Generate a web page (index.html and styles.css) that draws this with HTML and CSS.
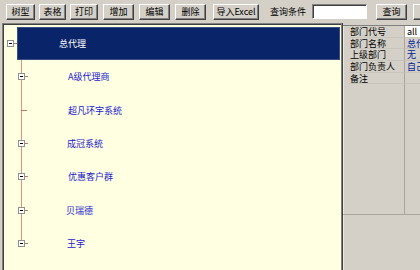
FILE: index.html
```html
<!DOCTYPE html>
<html>
<head>
<meta charset="utf-8">
<link rel="stylesheet" href="styles.css">
</head>
<body>
<div class="toolbar">
  <button class="btn b1">树型</button>
  <button class="btn b2">表格</button>
  <button class="btn b3">打印</button>
  <button class="btn b4">增加</button>
  <button class="btn b5">编辑</button>
  <button class="btn b5">删除</button>
  <button class="btn b6">导入Excel</button>
  <span class="label">查询条件</span>
  <input class="search" type="text">
  <button class="btn b7">查询</button>
  <button class="btn b8" aria-label="更多"></button>
</div>
<div class="main">
  <div class="tree">
    <div class="root">
      <span class="exp"></span><span class="dash"></span>
      <div class="root-label">总代理</div>
    </div>
    <div class="node">
      <div class="conn"><span class="exp"></span><span class="dash"></span></div>
      <span class="text">A级代理商</span>
    </div>
    <div class="node">
      <div class="conn leaf"><span class="dash long"></span></div>
      <span class="text">超凡环宇系统</span>
    </div>
    <div class="node">
      <div class="conn"><span class="exp"></span><span class="dash"></span></div>
      <span class="text t2">成冠系统</span>
    </div>
    <div class="node">
      <div class="conn"><span class="exp"></span><span class="dash"></span></div>
      <span class="text">优惠客户群</span>
    </div>
    <div class="node">
      <div class="conn"><span class="exp"></span><span class="dash"></span></div>
      <span class="text t3">贝瑞德</span>
    </div>
    <div class="node last">
      <div class="conn"><span class="exp"></span><span class="dash"></span></div>
      <span class="text t2">王宇</span>
    </div>
  </div>
  <div class="props">
    <div class="ptable">
      <div class="prow"><span class="gut"></span><span class="pk">部门代号</span><span class="pv edit">all</span></div>
      <div class="prow"><span class="gut"></span><span class="pk">部门名称</span><span class="pv">总代</span></div>
      <div class="prow"><span class="gut"></span><span class="pk">上级部门</span><span class="pv">无</span></div>
      <div class="prow"><span class="gut"></span><span class="pk">部门负责人</span><span class="pv">自己</span></div>
      <div class="prow"><span class="gut"></span><span class="pk">备注</span><span class="pv"></span></div>
      <div class="prow fill"><span class="gut"></span><span class="pk"></span><span class="pv"></span></div>
    </div>
    <div class="help"></div>
  </div>
</div>
</body>
</html>
```
FILE: styles.css
```css
html, body {
  margin: 0;
  padding: 0;
}
body {
  width: 420px;
  height: 270px;
  overflow: hidden;
  background: #d4d0c8;
  font-family: "Noto Sans CJK SC", "Liberation Sans", sans-serif;
  font-size: 9px;
  color: #000;
}
.toolbar {
  display: flex;
  align-items: center;
  height: 23px;
  white-space: nowrap;
}
.btn {
  flex: none;
  height: 16px;
  box-sizing: border-box;
  padding: 0;
  margin: 0;
  border: 1px solid;
  border-color: #fff #404040 #404040 #fff;
  box-shadow: inset -1px -1px #808080;
  background: #d4d0c8;
  font: inherit;
  color: #000;
  display: flex;
  align-items: center;
  justify-content: center;
  line-height: 1;
}
.b1 { width: 29px; margin-left: 6px; }
.b2 { width: 27px; margin-left: 4px; }
.b3 { width: 28px; margin-left: 4px; }
.b4 { width: 31px; margin-left: 5px; }
.b5 { width: 31px; margin-left: 5px; }
.b6 { width: 46px; margin-left: 7px; }
.b7 { width: 31px; margin-left: 9px; }
.b8 { width: 20px; margin-left: 6px; }
.label {
  flex: none;
  width: 36px;
  margin-left: 11px;
}
.search {
  flex: none;
  width: 55px;
  height: 15px;
  box-sizing: border-box;
  margin: 0 0 0 6px;
  padding: 0;
  border: 1px solid;
  border-color: #808080 #fff #fff #808080;
  box-shadow: inset 1px 1px #404040;
  background: #fff;
}
.main {
  display: flex;
  height: 247px;
}
.tree {
  width: 340px;
  margin-left: 2px;
  box-sizing: border-box;
  background: #ffffe1;
  border-top: 1px solid #808080;
  border-left: 1px solid #808080;
  border-right: 1px solid #808080;
  box-shadow: inset 1px 1px #404040;
  padding: 2px 0 0 1px;
  flex: none;
}
.root {
  display: flex;
  align-items: center;
  height: 34px;
}
.exp {
  flex: none;
  width: 7px;
  height: 7px;
  box-sizing: border-box;
  border: 1px solid #909090;
  background: #fff linear-gradient(#000, #000) center / 3px 1px no-repeat;
}
.root .exp {
  margin-left: 3px;
}
.dash {
  flex: none;
  width: 3px;
  height: 1px;
  background: #c07868;
}
.dash.long {
  width: 6px;
  margin-left: 6px;
}
.root-label {
  flex: 1;
  align-self: stretch;
  margin: 1px 1px 0 0;
  background: #0a246a;
  border: 1px solid #3a4e86;
  color: #fff;
  display: flex;
  align-items: center;
  padding-left: 41px;
}
.node {
  display: flex;
  align-items: center;
  height: 33.4px;
}
.conn {
  flex: none;
  align-self: stretch;
  width: 14px;
  margin-left: 11px;
  display: flex;
  align-items: center;
  padding-left: 3px;
  box-sizing: border-box;
  background: linear-gradient(#e4907e, #e4907e) 6px 0 / 1px 100% no-repeat;
}
.conn.leaf {
  padding-left: 0;
}
.node.last .conn {
  background-size: 1px 50%;
}
.text {
  color: #1a1ad0;
  margin-left: 39px;
}
.t2 { margin-left: 38px; }
.t3 { margin-left: 37px; }
.props {
  flex: 1;
  display: flex;
  flex-direction: column;
  border-left: 1px solid #404040;
  padding-top: 2px;
  min-width: 0;
}
.ptable {
  display: flex;
  flex-direction: column;
  height: 188px;
  border-top: 1px solid #808080;
  border-bottom: 1px solid #a8a59e;
}
.prow {
  display: grid;
  grid-template-columns: 6px 56px 1fr;
  height: 11.7px;
  line-height: 11px;
}
.prow.fill {
  flex: 1;
}
.gut {
  border-left: 1px solid #ece9e2;
}
.pk {
  white-space: nowrap;
  overflow: hidden;
  border-bottom: 1px solid #c8c5bd;
  border-right: 1px solid #a8a59e;
  padding-left: 1px;
}
.pv {
  white-space: nowrap;
  overflow: hidden;
  border-bottom: 1px solid #c8c5bd;
  padding-left: 2px;
  color: #00209a;
}
.pv.edit {
  background: #fff;
  color: #000;
}
.prow.fill .pk, .prow.fill .pv {
  border-bottom: none;
}
.help {
  flex: 1;
  border-left: 1px solid #ece9e2;
}
```
